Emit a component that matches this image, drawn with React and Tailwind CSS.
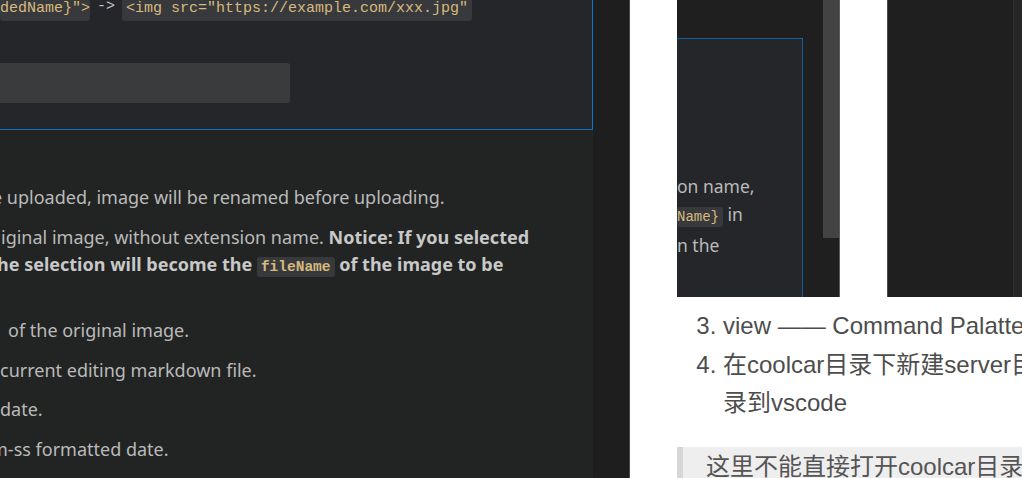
const sans = { fontFamily: '"Noto Sans", "Open Sans", sans-serif' };
const cjk = { fontFamily: '"Liberation Sans", "Noto Sans CJK SC", sans-serif' };

function Chip({ children, className = "" }) {
  return (
    <span
      className={
        "rounded-[3px] bg-[#38393c] text-[#d7ba7d] font-['Liberation_Mono',monospace] " +
        className
      }
    >
      {children}
    </span>
  );
}

const lines = [
  <span className="-ml-[8px]">e uploaded, image will be renamed before uploading.</span>,
  <>
    <div>
      <span className="ml-[1px]">iginal image, without extension name. </span>
      <b className="text-[#c8c8c8]">Notice: If you selected</b>
    </div>
    <div className="font-bold text-[#c8c8c8]">
      <span className="-ml-[3px]">he selection will become the </span>
      <Chip className="px-[4px] py-[2px] text-[14.5px]">fileName</Chip> of the image to be
    </div>
    <div className="h-[24px]" />
  </>,
  <span className="ml-[8px]">of the original image.</span>,
  <span>current editing markdown file.</span>,
  <span>date.</span>,
  <span className="-ml-[9px]">m-ss formatted date.</span>,
];

export default function App() {
  return (
    <div className="flex h-[478px] w-[1022px] overflow-hidden bg-white" style={sans}>
      {/* left: cropped editor screenshot */}
      <div className="flex w-[630px] shrink-0 border-r border-[#4b4b4b] bg-[#1e1e1e]">
        <div className="w-[593px] shrink-0 overflow-hidden bg-[#222423] text-[18px] text-[#bababa]">
          <div className="h-[130px] border-r border-b border-[#1273c4] bg-[#25262a]">
            <div className="flex h-[21px] items-end gap-[7px] overflow-hidden whitespace-nowrap text-[15px]">
              <Chip className="block h-[26px] leading-[28px]">dedName}"&gt;</Chip>
              <span className="font-['Liberation_Mono',monospace] leading-[28px] text-[#c8c8c8]">-&gt;</span>
              <Chip className="block h-[26px] px-[4px] leading-[28px]">&lt;img src="https://example.com/xxx.jpg"</Chip>
            </div>
            <div className="mt-[42px] h-[40px] w-[290px] rounded-r-[3px] bg-[#3a3b3d]" />
          </div>
          <ul className="flex flex-col gap-[12.5px] pt-[54px] leading-[27px] whitespace-nowrap">
            {lines.map((l, i) => (
              <li key={i}>{l}</li>
            ))}
          </ul>
        </div>
      </div>

      {/* right: blog article */}
      <div className="min-w-0 flex-1 overflow-hidden pl-[47px]">
        <div className="flex h-[297px] w-[400px]">
          <div className="flex w-[163px] shrink-0 bg-[#1f1f1f]">
            <div className="mt-[38px] w-[126px] shrink-0 overflow-hidden border-t border-r border-[#11609f] bg-[#25262a] pt-[133px] text-[17.5px] leading-[28px] whitespace-nowrap text-[#bababa]">
              <div>on name,</div>
              <div>
                <Chip className="py-[2px] pr-[4px] text-[14px]">Name}</Chip> in
              </div>
              <div>n the</div>
            </div>
            <div className="w-[20px] shrink-0" />
            <div className="flex w-[16px] shrink-0 flex-col">
              <div className="h-[238px] bg-[#434343]" />
            </div>
            <div className="w-px shrink-0 bg-[#5c5c5c]" />
          </div>
          <div className="w-[47px] shrink-0" />
          <div className="flex flex-1 border-l border-[#4a4a4a] bg-[#1f1f1f]">
            <div className="w-[126px] shrink-0 border-r border-[#303030]" />
            <div className="flex-1 bg-[#262626]" />
          </div>
        </div>

        <ol
          start={3}
          className="mt-[10px] list-decimal pl-[46px] text-[24px] leading-[38.5px] whitespace-nowrap text-[#4d4d4d]"
          style={cjk}
        >
          <li>view —— Command Palatte</li>
          <li>
            在coolcar目录下新建server目录，并添加server目
            <br />
            录到vscode
          </li>
        </ol>

        <blockquote
          className="mt-[24px] border-l-[6px] border-[#d6d6d6] bg-[#eeeeee] pl-[23px] pt-[3px] text-[24px] leading-[34px] whitespace-nowrap text-[#555555]"
          style={cjk}
        >
          这里不能直接打开coolcar目录
        </blockquote>
      </div>
    </div>
  );
}
